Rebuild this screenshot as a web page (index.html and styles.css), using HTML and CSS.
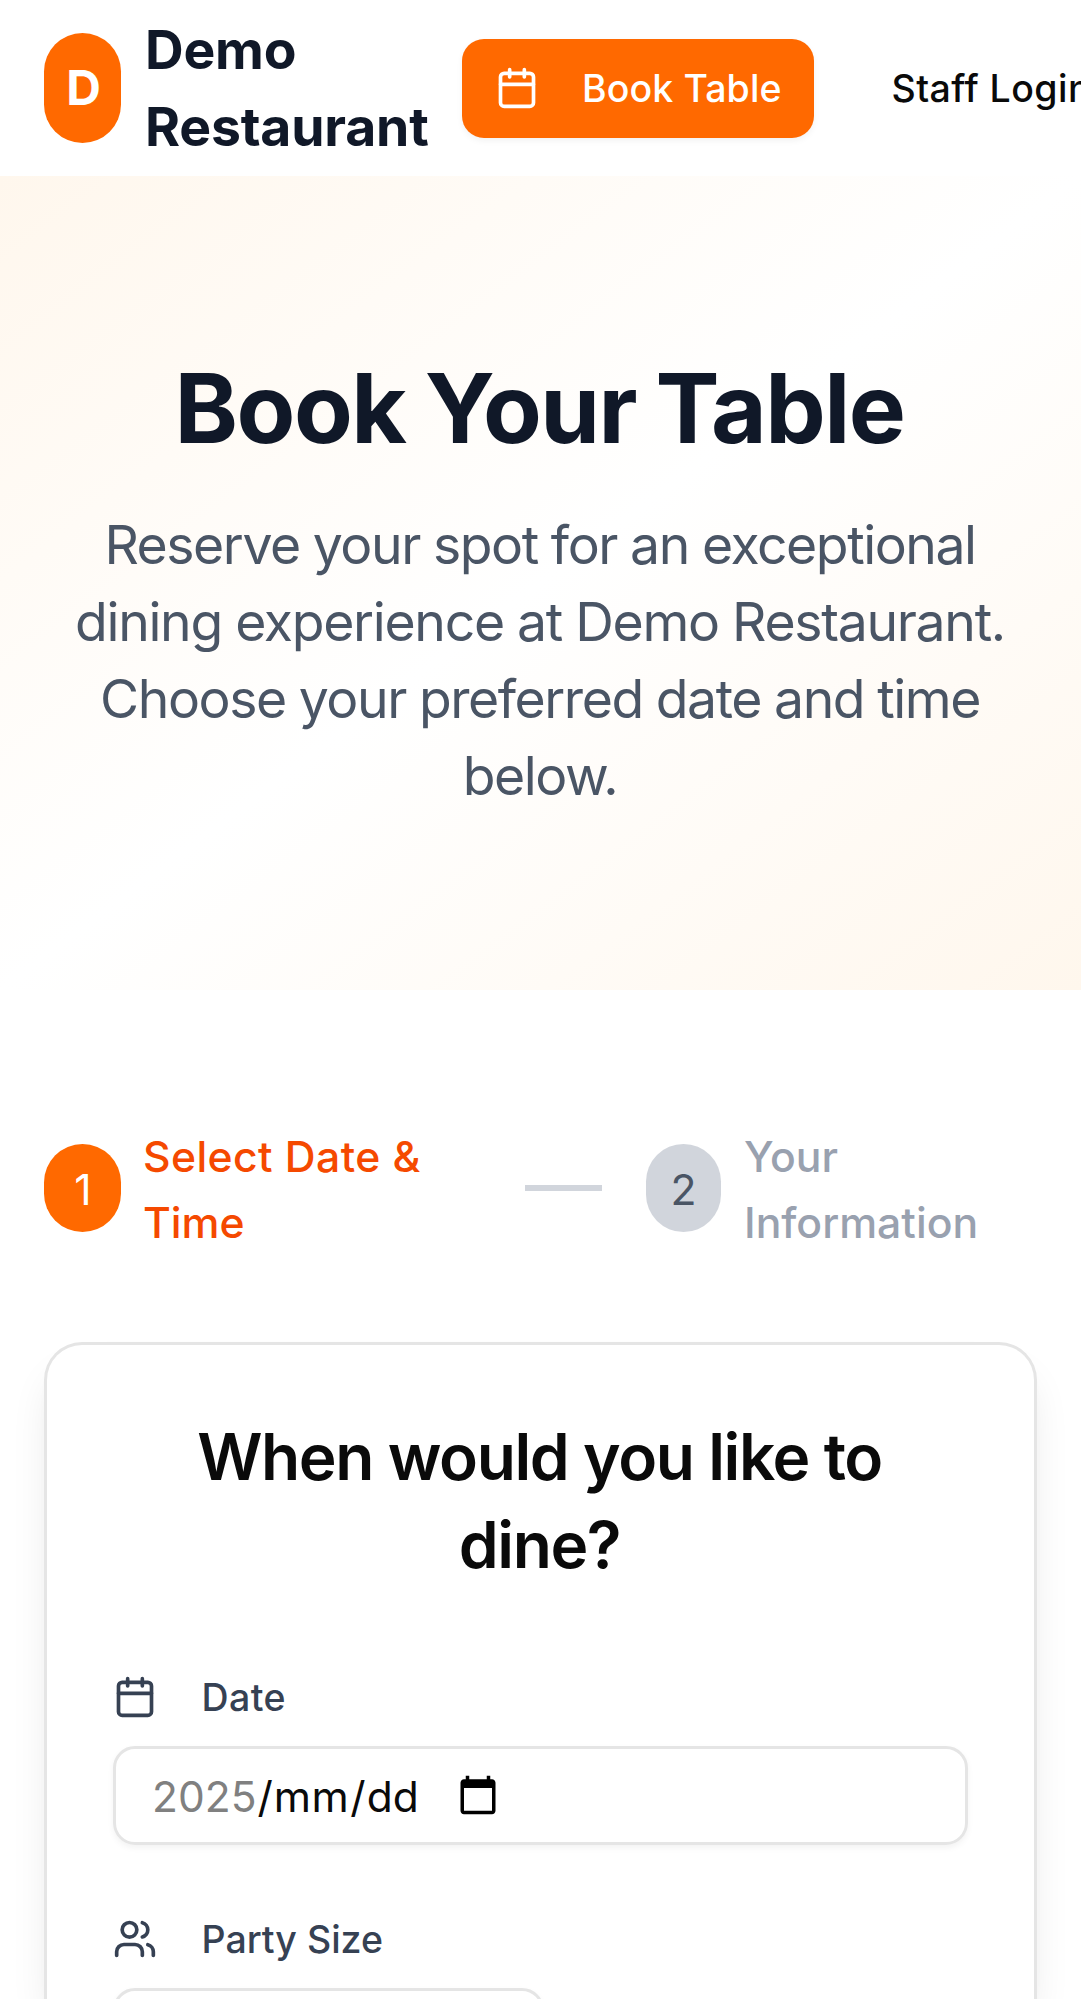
FILE: index.html
```html
<!DOCTYPE html>
<html lang="en">
<head>
<meta charset="utf-8">
<title>Book Your Table</title>
<link rel="stylesheet" href="styles.css">
</head>
<body>
<header class="site-header">
  <div class="logo">D</div>
  <div class="brand">Demo<br>Restaurant</div>
  <a class="button"><svg class="icon" viewBox="0 0 24 24"><path d="M8 2v4M16 2v4M3 10h18"/><rect x="3" y="4" width="18" height="18" rx="2"/></svg><span>Book Table</span></a>
  <a class="login">Staff Login</a>
</header>
<section class="hero">
  <h1>Book Your Table</h1>
  <p>Reserve your spot for an exceptional<br><span class="looser">dining experience at Demo Restaurant.</span><br>Choose your preferred date and time<br>below.</p>
</section>
<main>
  <div class="steps">
    <div class="badge active">1</div>
    <div class="step-label active-label"><span class="wide">Select Date &amp;</span><br>Time</div>
    <div class="line"></div>
    <div class="badge next">2</div>
    <div class="step-label next-label">Your<br>Information</div>
  </div>
  <div class="card">
    <h2>When would you like to<br>dine?</h2>
    <div class="field">
      <div class="label"><svg class="icon" viewBox="0 0 24 24"><path d="M8 2v4M16 2v4M3 10h18"/><rect x="3" y="4" width="18" height="18" rx="2"/></svg><span class="wide">Date</span></div>
      <div class="input"><span class="year">2025</span><span class="slash">/</span><span class="month">mm</span><span class="slash">/</span><span>dd</span>
        <svg class="picker" viewBox="0 0 24 24"><path d="M20 3h-1V1h-2v2H7V1H5v2H4c-1.1 0-2 .9-2 2v16c0 1.1.9 2 2 2h16c1.1 0 2-.9 2-2V5c0-1.1-.9-2-2-2zm0 18H4V8h16v13z"/></svg></div>
    </div>
    <div class="field">
      <div class="label"><svg class="icon" viewBox="0 0 24 24"><path d="M16 21v-2a4 4 0 0 0-4-4H6a4 4 0 0 0-4 4v2M16 3.128a4 4 0 0 1 0 7.744M22 21v-2a4 4 0 0 0-3-3.87"/><circle cx="9" cy="7" r="4"/></svg><span>Party Size</span></div>
      <div class="input select"></div>
    </div>
  </div>
</main>
</body>
</html>
```
FILE: styles.css
```css
* { box-sizing: border-box; }
html { height: 1999px; overflow: hidden; }
body { margin: 0; width: 1081px; height: 1999px; overflow: hidden; background: #fff; color: #0a0a0a; font-family: Inter, "Liberation Sans", sans-serif; }
.icon { width: 44px; height: 44px; flex: none; fill: none; stroke: currentColor; stroke-width: 2; stroke-linecap: round; stroke-linejoin: round; }
.wide { letter-spacing: .4px; }

.site-header { height: 176px; padding-left: 44px; display: flex; align-items: center; white-space: nowrap; }
.logo { width: 77px; height: 110px; flex: none; padding-left: 2px; border-radius: 39px; background: #ff6900; color: #fff; font-size: 48px; font-weight: 700; line-height: 66px; display: flex; align-items: center; justify-content: center; }
.brand { width: 317px; flex: none; margin-left: 24px; font-size: 53.5px; line-height: 77px; font-weight: 700; letter-spacing: -.2px; color: #101828; }
.button { width: 352px; height: 99px; flex: none; padding-left: 33px; border-radius: 22px; background: #ff6900; color: #fff; display: flex; align-items: center; gap: 43px; font-size: 37.5px; font-weight: 500; letter-spacing: .1px; box-shadow: 0 3px 6px rgba(0,0,0,.05); }
.login { margin-left: 77.5px; font-size: 37.5px; font-weight: 500; letter-spacing: .45px; }

.hero { height: 814px; padding-top: 177px; text-align: center; white-space: nowrap; background: linear-gradient(to bottom right, #fff7ed, #fff, #fff7ed); }
h1 { margin: 0 0 43px; font-size: 96px; line-height: 110px; font-weight: 700; letter-spacing: -1.5px; word-spacing: -2px; color: #101828; padding-right: 2px; }
.hero p { margin: 0; padding-right: 1px; font-size: 53.5px; line-height: 77px; letter-spacing: -1.45px; word-spacing: -.5px; color: #4a5565; }
.hero .looser { letter-spacing: -1.3px; }

main { padding: 132px 44px 0; }
.steps { display: flex; align-items: center; height: 132px; margin-bottom: 88px; font-size: 42.7px; line-height: 66px; white-space: nowrap; }
.badge { height: 88px; flex: none; padding: 3px 0 0 1px; border-radius: 39px; display: flex; align-items: center; justify-content: center; }
.active { width: 77px; background: #ff6900; color: #fff; }
.next { width: 75px; margin-left: 44px; padding-left: 0; background: #d1d5dc; color: #4a5565; }
.step-label { margin-left: 22px; padding-top: 3px; font-weight: 500; color: #99a1af; }
.active-label { width: 382px; color: #f54900; }
.next-label { margin-left: 23px; }
.line { width: 77px; height: 5.5px; background: #d1d5dc; }

.card { height: 657px; padding: 66px 66px 0; border: 3px solid #e5e5e5; border-bottom: 0; border-radius: 38px 38px 0 0; overflow: hidden; box-shadow: 0 27px 41px -8px rgba(0,0,0,.1), 0 11px 16px -11px rgba(0,0,0,.1); }
h2 { margin: 2px 0 80px; padding-right: 2px; font-size: 64px; line-height: 88px; font-weight: 600; letter-spacing: -1.4px; text-align: center; white-space: nowrap; }
.field { margin-bottom: 67px; }
.label { height: 55px; margin-bottom: 22px; display: flex; align-items: center; gap: 44.5px; font-size: 37.5px; font-weight: 500; color: #364153; }
.field + .field .label { margin-top: -1px; }
.label span { padding-top: 1px; }
.input { height: 99px; padding-left: 36px; border: 3px solid #e5e5e5; border-radius: 22px; box-shadow: 0 3px 6px rgba(0,0,0,.05); display: flex; align-items: center; font-size: 42.5px; }
.input span { padding-top: 2px; }
.year { color: #808080; }
.slash { margin: 0 1px; }
.month { letter-spacing: .5px; }
.picker { width: 42px; height: 42px; margin: 0 0 2px 38.5px; }
.select { width: 431px; }
```
